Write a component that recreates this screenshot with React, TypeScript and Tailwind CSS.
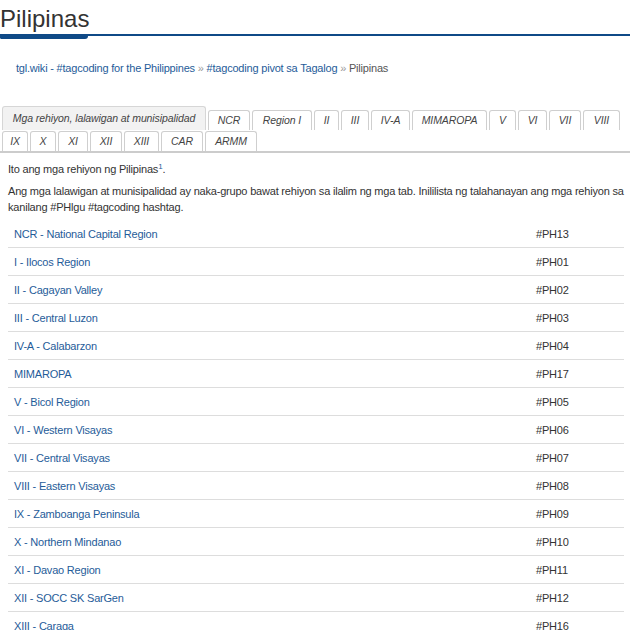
const ROW1 = [
  { label: "Mga rehiyon, lalawigan at munisipalidad", w: "w-[204px]", active: true },
  { label: "NCR", w: "w-[42px]" },
  { label: "Region I", w: "w-[60px]" },
  { label: "II", w: "w-[25px]" },
  { label: "III", w: "w-[28px]" },
  { label: "IV-A", w: "w-[39px]" },
  { label: "MIMAROPA", w: "w-[75px]" },
  { label: "V", w: "w-[27px]" },
  { label: "VI", w: "w-[29px]" },
  { label: "VII", w: "w-[32px]" },
  { label: "VIII", w: "w-[37px]" },
];

const ROW2 = [
  { label: "IX", w: "w-[26px]" },
  { label: "X", w: "w-[26px]" },
  { label: "XI", w: "w-[30px]" },
  { label: "XII", w: "w-[32px]" },
  { label: "XIII", w: "w-[35px]" },
  { label: "CAR", w: "w-[42px]" },
  { label: "ARMM", w: "w-[52px]" },
];

const REGIONS: [string, string][] = [
  ["NCR - National Capital Region", "#PH13"],
  ["I - Ilocos Region", "#PH01"],
  ["II - Cagayan Valley", "#PH02"],
  ["III - Central Luzon", "#PH03"],
  ["IV-A - Calabarzon", "#PH04"],
  ["MIMAROPA", "#PH17"],
  ["V - Bicol Region", "#PH05"],
  ["VI - Western Visayas", "#PH06"],
  ["VII - Central Visayas", "#PH07"],
  ["VIII - Eastern Visayas", "#PH08"],
  ["IX - Zamboanga Peninsula", "#PH09"],
  ["X - Northern Mindanao", "#PH10"],
  ["XI - Davao Region", "#PH11"],
  ["XII - SOCC SK SarGen", "#PH12"],
  ["XIII - Caraga", "#PH16"],
  ["CAR - Cordillera Administrative Region", "#PH14"],
  ["ARMM - Autonomous Region in Muslim Mindanao", "#PH15"],
];

type Tab = { label: string; w: string; active?: boolean };

function TabItem({ tab }: { tab: Tab }) {
  return (
    <div
      className={`${tab.w} ${
        tab.active ? "h-[24px] bg-[#f2f2f2] border-[#d6d6d6]" : "h-[20px] bg-white border-[#cfcfcf]"
      } flex items-center justify-center border border-b-0 rounded-t-[3px] text-[10.5px] tracking-[-0.1px] italic text-[#444] whitespace-nowrap`}
    >
      {tab.label}
    </div>
  );
}

export default function App() {
  return (
    <div className="w-[630px] bg-white text-[#333] font-['Liberation_Sans',Arial,sans-serif]">
      {/* Header */}
      <h1 className="pt-[5px] text-[24px] leading-[28px] font-normal text-[#333]">Pilipinas</h1>
      <div className="mt-[1px]">
        <div className="h-[2px] bg-[#0f4a87]" />
        <div className="w-[88px] h-[3px] bg-[#0f4a87] rounded-b-[3px] rounded-br-[6px]" />
      </div>

      {/* Breadcrumb */}
      <div className="mt-[22px] pl-[16px] text-[11px] tracking-[-0.2px] leading-[14px]">
        <a className="text-[#1f5c99]">tgl.wiki - #tagcoding for the Philippines</a>
        <span className="text-[#999]"> » </span>
        <a className="text-[#1f5c99]">#tagcoding pivot sa Tagalog</a>
        <span className="text-[#999]"> » </span>
        <span className="text-[#555]">Pilipinas</span>
      </div>

      {/* Tabs */}
      <div className="mt-[31px]">
        <div className="flex items-end gap-[2px] pl-[2px]">
          {ROW1.map((t) => (
            <TabItem key={t.label} tab={t} />
          ))}
        </div>
        <div className="mt-[1px] flex items-end gap-[2px] pl-[2px]">
          {ROW2.map((t) => (
            <TabItem key={t.label} tab={t} />
          ))}
        </div>
        <div className="h-[2px] bg-[#cccccc]" />
      </div>

      {/* Content */}
      <div className="px-[8px] pr-[6px] text-[11px] tracking-[-0.2px] leading-[16px]">
        <p className="mt-[8px]">
          Ito ang mga rehiyon ng Pilipinas
          <sup className="relative -top-[4px] text-[8px] text-[#1f5c99]">1</sup>.
        </p>
        <p className="mt-[6px]">
          Ang mga lalawigan at munisipalidad ay naka-grupo bawat rehiyon sa ilalim ng mga tab. Inililista ng
          talahanayan ang mga rehiyon sa kanilang #PHlgu #tagcoding hashtag.
        </p>
        <div className="mt-[5px]">
          {REGIONS.map(([name, tag], i) => (
            <div
              key={tag}
              className={`grid grid-cols-[1fr_94px] h-[28px] items-center ${
                i < REGIONS.length - 1 ? "border-b border-[#dddddd]" : ""
              }`}
            >
              <a className="pl-[6px] text-[#1f5c99]">{name}</a>
              <span className="pl-[6px] text-[#333]">{tag}</span>
            </div>
          ))}
        </div>
      </div>
    </div>
  );
}
